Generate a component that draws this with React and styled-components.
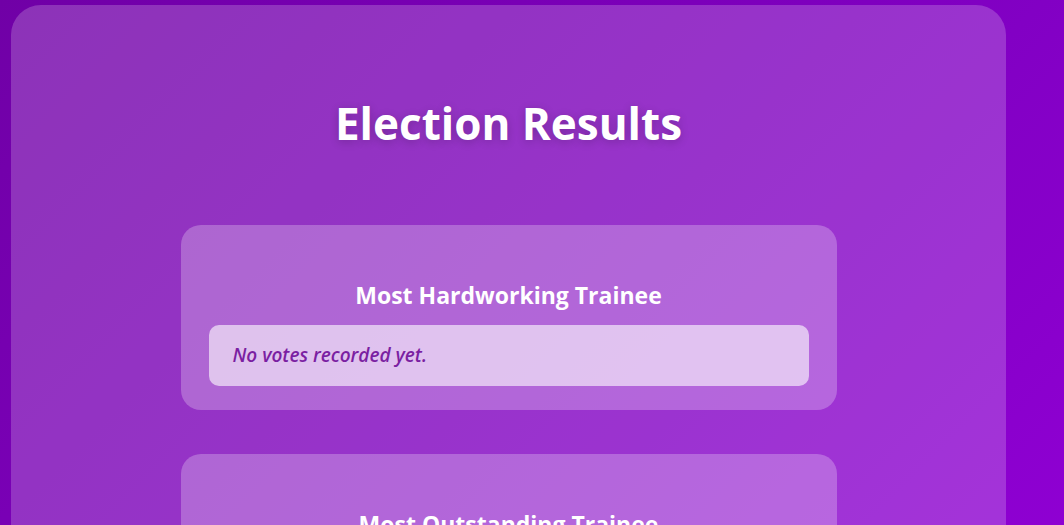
import React from 'react'
import styled, { createGlobalStyle } from 'styled-components'

const GlobalStyle = createGlobalStyle`
  html, body {
    margin: 0;
    padding: 0;
  }
  body {
    min-height: 525px;
    overflow: hidden;
    font-family: 'Open Sans', 'Noto Sans', sans-serif;
    background: linear-gradient(135deg, #7000a6 0%, #8200c4 60%, #9200d6 100%);
  }
`

const Page = styled.div`
  padding: 5px 0 0 11px;
`

const Panel = styled.main`
  width: 995px;
  min-height: 600px;
  box-sizing: border-box;
  padding: 90px 0 40px;
  border-radius: 30px;
  background: rgba(255, 255, 255, 0.2);
  display: flex;
  flex-direction: column;
  align-items: center;
`

const Title = styled.h1`
  margin: 0 0 74px;
  color: #fff;
  font-size: 44px;
  line-height: 56px;
  font-weight: 700;
  text-shadow: 0 2px 10px rgba(0, 0, 0, 0.2);
`

const CategoryList = styled.div`
  display: flex;
  flex-direction: column;
  gap: 44px;
`

const Card = styled.section`
  width: 656px;
  box-sizing: border-box;
  padding: 55px 28px 24px;
  border-radius: 20px;
  background: rgba(255, 255, 255, 0.25);
`

const CardTitle = styled.h2`
  margin: 0 0 15px;
  color: #fff;
  text-align: center;
  font-size: 23px;
  line-height: 30px;
  font-weight: 700;
`

const Empty = styled.p`
  margin: 0;
  padding: 18px 24px;
  border-radius: 10px;
  background: rgba(255, 255, 255, 0.6);
  color: #7b1fa2;
  font-size: 19px;
  line-height: 25px;
  font-style: italic;
  font-weight: 600;
`

const categories = ['Most Hardworking Trainee', 'Most Outstanding Trainee']

export default function App() {
  return (
    <>
      <GlobalStyle />
      <Page>
        <Panel>
          <Title>Election Results</Title>
          <CategoryList>
            {categories.map((name) => (
              <Card key={name}>
                <CardTitle>{name}</CardTitle>
                <Empty>No votes recorded yet.</Empty>
              </Card>
            ))}
          </CategoryList>
        </Panel>
      </Page>
    </>
  )
}
